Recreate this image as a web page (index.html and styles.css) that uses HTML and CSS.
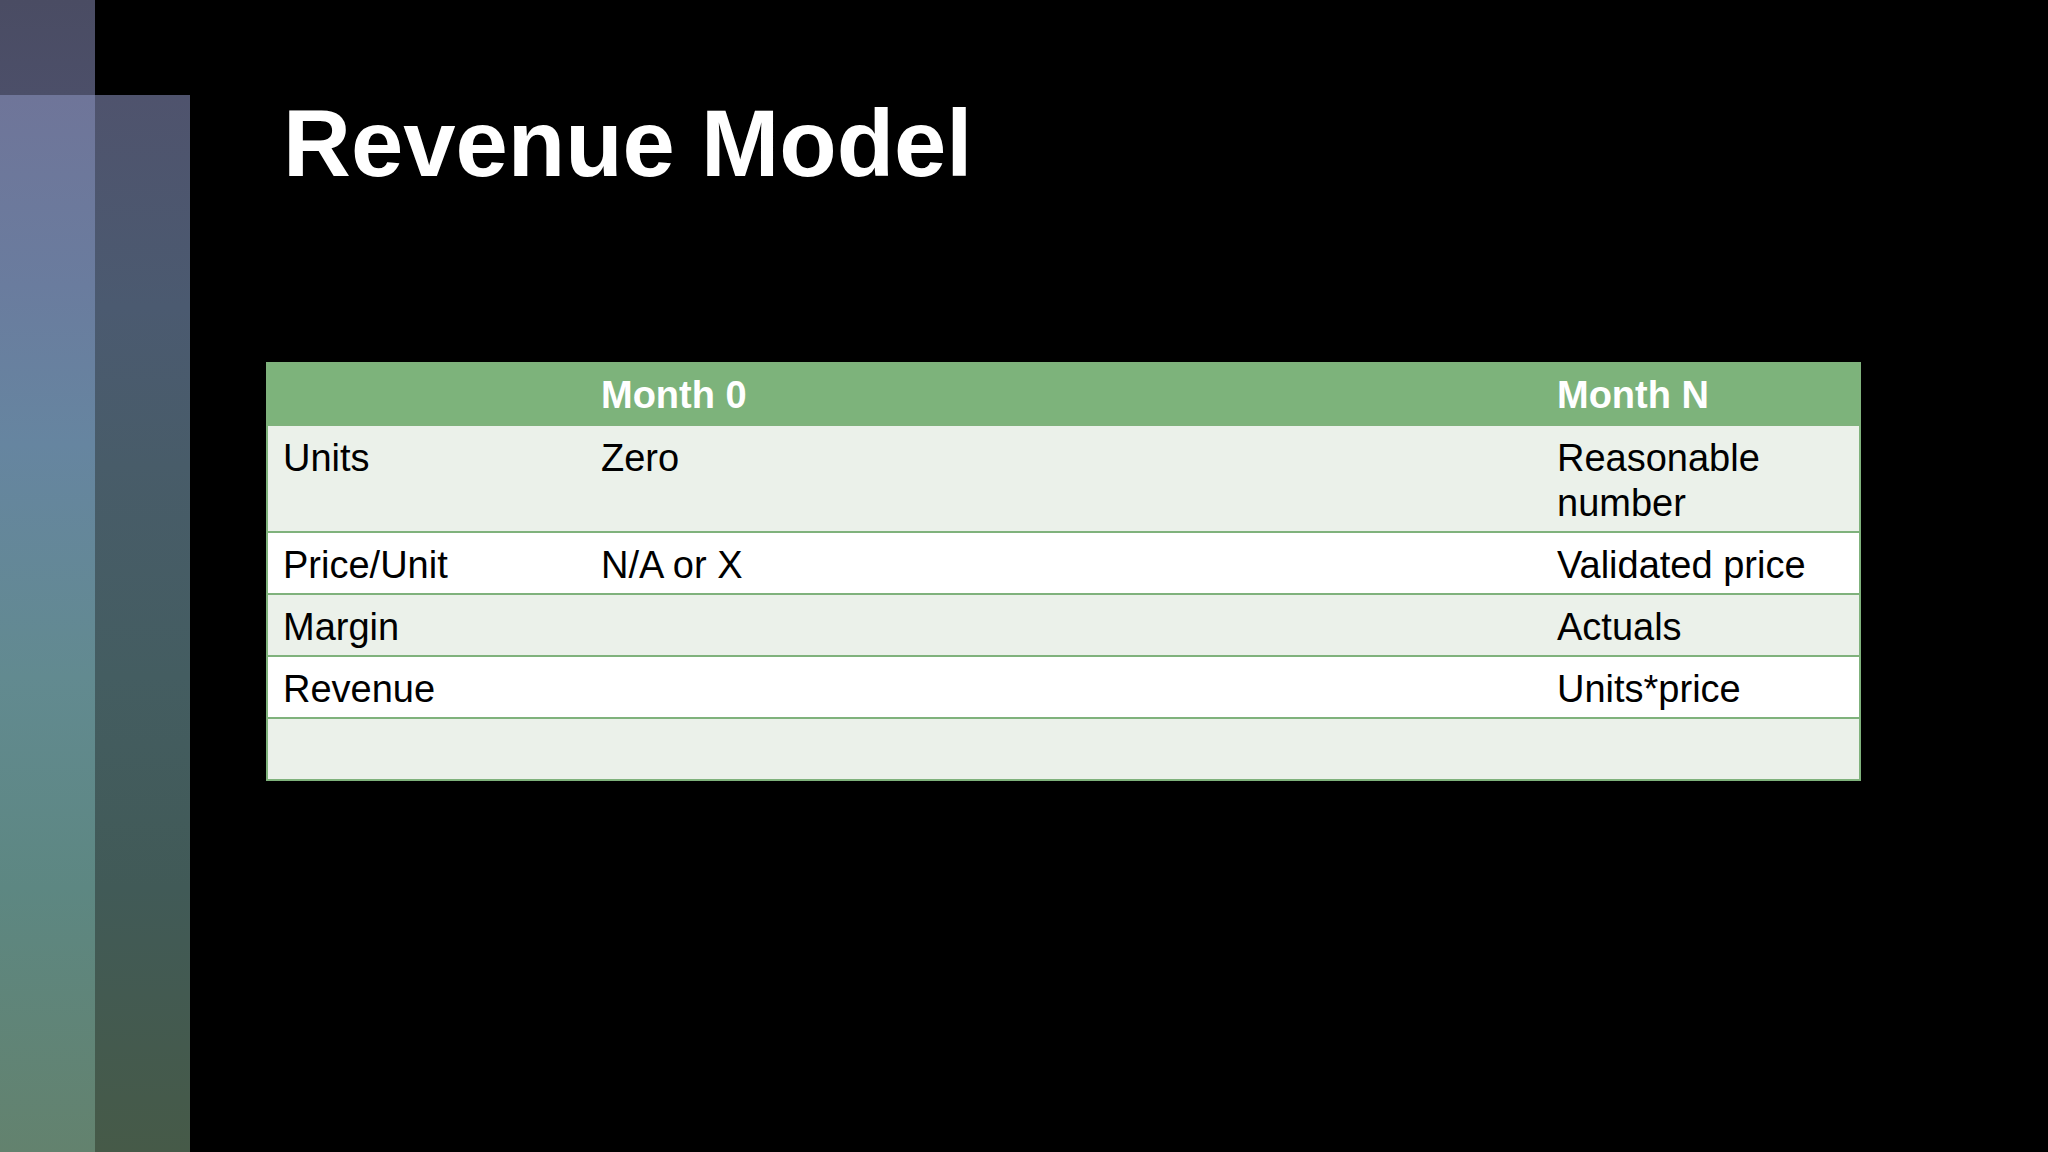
FILE: index.html
```html
<!DOCTYPE html>
<html lang="en">
<head>
<meta charset="utf-8">
<title>Revenue Model</title>
<link rel="stylesheet" href="styles.css">
</head>
<body>
<div class="slide">
  <div class="deco">
    <div class="deco-col deco-col-a">
      <div class="deco-cap"></div>
      <div class="deco-bar"></div>
    </div>
    <div class="deco-col deco-col-b">
      <div class="deco-cap"></div>
      <div class="deco-bar"></div>
    </div>
  </div>
  <main class="content">
    <h1 class="title">Revenue Model</h1>
    <table class="model">
      <colgroup>
        <col class="c-label">
        <col class="c-mid">
        <col class="c-last">
      </colgroup>
      <thead>
        <tr>
          <th>&nbsp;</th>
          <th>Month 0</th>
          <th>Month N</th>
        </tr>
      </thead>
      <tbody>
        <tr class="tint">
          <td>Units</td>
          <td>Zero</td>
          <td>Reasonable number</td>
        </tr>
        <tr>
          <td>Price/Unit</td>
          <td>N/A or X</td>
          <td>Validated price</td>
        </tr>
        <tr class="tint">
          <td>Margin</td>
          <td>&nbsp;</td>
          <td>Actuals</td>
        </tr>
        <tr>
          <td>Revenue</td>
          <td>&nbsp;</td>
          <td>Units*price</td>
        </tr>
        <tr class="tint">
          <td>&nbsp;</td>
          <td>&nbsp;</td>
          <td>&nbsp;</td>
        </tr>
      </tbody>
    </table>
  </main>
</div>
</body>
</html>
```

FILE: styles.css
```css
html, body {
  margin: 0;
  padding: 0;
  background: #000;
}

body {
  width: 2048px;
  height: 1152px;
  overflow: hidden;
  font-family: "Liberation Sans", Arial, sans-serif;
}

.slide {
  display: flex;
  width: 2048px;
  height: 1152px;
  background: #000;
}

.deco {
  display: flex;
  width: 190px;
  height: 100%;
  flex: none;
}

.deco-col {
  display: flex;
  flex-direction: column;
  width: 95px;
}

.deco-cap {
  height: 95px;
  flex: none;
}

.deco-bar {
  flex: 1;
}

.deco-col-a .deco-cap {
  background: linear-gradient(180deg, #4a4c63 0%, #4c4f69 100%);
}

.deco-col-a .deco-bar {
  background: linear-gradient(180deg,
    #6f7599 0%,
    #6a7c9e 18%,
    #6685a0 33%,
    #628a90 55%,
    #5d8782 75%,
    #63826e 100%);
}

.deco-col-b .deco-cap {
  background: #000;
}

.deco-col-b .deco-bar {
  background: linear-gradient(180deg,
    #4f536d 0%,
    #4b5a70 20%,
    #485c69 35%,
    #445d61 55%,
    #415a57 75%,
    #465a48 100%);
}

.content {
  flex: 1;
  display: flex;
  flex-direction: column;
  padding: 90px 0 0 76px;
}

.title {
  margin: 0 0 0 17px;
  color: #fff;
  font-weight: bold;
  font-size: 94px;
  line-height: 107px;
  letter-spacing: 0;
}

.model {
  margin-top: 165px;
  width: 1593px;
  table-layout: fixed;
  border-collapse: collapse;
  border: 2px solid #7fb27c;
  font-size: 38px;
  line-height: 45px;
  color: #000;
}

.c-label { width: 319px; }
.c-mid { width: 956px; }
.c-last { width: 318px; }

.model th,
.model td {
  padding: 9px 16px 6px 15px;
  text-align: left;
  vertical-align: top;
}

.model td {
  padding-top: 10px;
  padding-bottom: 5px;
}

.model th {
  background: #7db37b;
  color: #fff;
  font-weight: bold;
}

.model td {
  background: #fff;
  border-top: 2px solid #7fb27c;
}

.model tr.tint td {
  background: #ebf1ea;
}
```
